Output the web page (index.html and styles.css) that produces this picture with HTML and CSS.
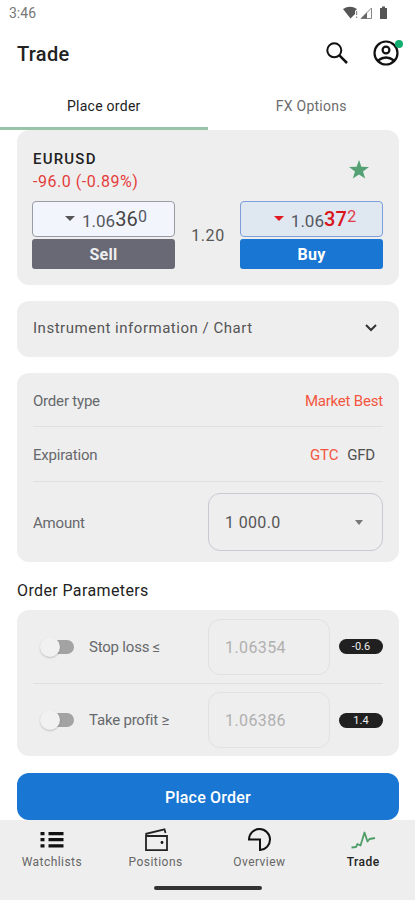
FILE: index.html
```html
<!DOCTYPE html>
<html lang="en">
<head>
<meta charset="utf-8">
<meta name="viewport" content="width=device-width, initial-scale=1">
<title>Trade</title>
<link rel="stylesheet" href="styles.css">
</head>
<body>
<div class="status">
  <span class="clock">3:46</span>
  <svg class="status-icons" width="46" height="14" viewBox="0 0 46 14">
    <path fill="#555" d="M0 3Q7-1.500 14 3L12 5V8L7.500 12.500Z"/>
    <path fill="#888" d="M13 5H14.200V9H13ZM13 10.500H14.200V12H13Z"/>
    <path fill="#fff" stroke="#888" d="M18 12.500L28.500 2V12.500Z"/>
    <path fill="#666" d="M18 12.500L24 6.500V12.500Z"/>
    <path fill="#555" d="M37 2H39V.500H42V2H44V13H37Z"/>
  </svg>
</div>
<header class="header">
  <h1>Trade</h1>
  <div class="header-icons">
    <svg width="24" height="24" viewBox="0 0 24 24" fill="none" stroke="#111" stroke-width="2"><circle cx="9.300" cy="9.300" r="7"/><path stroke-width="2.500" d="M14.400 14.400L22 22"/></svg>
    <div class="account">
      <svg width="26" height="26" viewBox="0 0 26 26" fill="none" stroke="#111" stroke-width="2.200"><circle cx="13" cy="13" r="11.500"/><circle cx="13" cy="10" r="3.400"/><path d="M5 20.500Q13 14.500 21 20.500"/></svg>
      <i class="dot"></i>
    </div>
  </div>
</header>
<nav class="tabs">
  <span class="tab active">Place order</span>
  <span class="tab">FX Options</span>
</nav>
<main>
  <section class="card quote">
    <div class="quote-head">
      <div>
        <div class="symbol">EURUSD</div>
        <div class="change">-96.0 (-0.89%)</div>
      </div>
      <svg class="star" width="20" height="19" viewBox="0 0 20 19"><path fill="#55a174" d="M10 0L12.400 6.700L20 7L14 11.500L16.200 18.500L10 14.400L3.800 18.500L6 11.500L0 7L7.600 6.700Z"/></svg>
    </div>
    <div class="prices">
      <div class="side sell">
        <div class="price"><i class="tri"></i><span class="p1">1.06</span><span class="p2">36</span><span class="p3">0</span></div>
        <div class="action">Sell</div>
      </div>
      <div class="spread">1.20</div>
      <div class="side buy">
        <div class="price"><i class="tri"></i><span class="p1">1.06</span><span class="p2">37</span><span class="p3">2</span></div>
        <div class="action">Buy</div>
      </div>
    </div>
  </section>
  <section class="card info">
    <span>Instrument information / Chart</span>
    <svg width="12" height="8" viewBox="0 0 12 8"><path fill="none" stroke="#333" stroke-width="2" d="M1 1L6 6L11 1"/></svg>
  </section>
  <section class="card order">
    <div class="row r1"><span>Order type</span><span class="red">Market Best</span></div>
    <div class="row r2"><span>Expiration</span><span class="terms"><span class="red">GTC</span><span class="dark">GFD</span></span></div>
    <div class="row r3"><span>Amount</span><div class="select"><span>1 000.0</span><i class="tri"></i></div></div>
  </section>
  <h2>Order Parameters</h2>
  <section class="card params">
    <div class="param">
      <div class="toggle"><i class="knob"></i></div><span class="label">Stop loss ≤</span>
      <div class="field">1.06354</div><span class="pill">-0.6</span>
    </div>
    <div class="param">
      <div class="toggle"><i class="knob"></i></div><span class="label">Take profit ≥</span>
      <div class="field">1.06386</div><span class="pill">1.4</span>
    </div>
  </section>
  <div class="submit">Place Order</div>
</main>
<footer>
  <div class="nav">
    <div class="item">
      <svg width="26" height="26" viewBox="0 0 26 26" fill="#111"><path d="M1.500 5h4v3.300H1.500zM9.500 5h15v3.300H9.500zM1.500 11h4v3.300H1.500zM9.500 11h15v3.300H9.500zM1.500 17.200h4v3.300H1.500zM9.500 17.200h15v3.300H9.500z"/></svg>
      <span>Watchlists</span>
    </div>
    <div class="item">
      <svg width="26" height="26" viewBox="0 0 26 26" fill="none" stroke="#222" stroke-width="1.800"><path d="M3 9H24V23.200H3ZM3.200 9V6.800L21.500 2.300L22.500 6"/><circle cx="19" cy="15.500" r="1.400" fill="#111" stroke="none"/></svg>
      <span>Positions</span>
    </div>
    <div class="item">
      <svg width="26" height="26" viewBox="0 0 26 26" fill="none" stroke="#111" stroke-width="2"><path d="M3 12.500A10.500 10.500 0 1 1 14 23V12.500Z"/></svg>
      <span>Overview</span>
    </div>
    <div class="item current">
      <svg width="26" height="26" viewBox="0 0 26 26" fill="none" stroke="#4f9d69" stroke-width="1.800" stroke-linejoin="round"><path d="M1.500 20.500L6 20L7.500 17L10.500 18.500L14.500 5.500L17.500 14.500L19.500 12L25 11"/></svg>
      <span>Trade</span>
    </div>
  </div>
  <div class="home"></div>
</footer>
</body>
</html>
```
FILE: styles.css
```css
* { box-sizing: border-box; }
body { margin: 0; width: 415px; height: 900px; overflow: hidden; background: #fff; color: #222; font-family: Roboto, sans-serif; font-size: 14px; white-space: nowrap; display: flex; flex-direction: column; }
i { display: block; }
svg { display: block; flex: none; }
.status { height: 26px; padding: 0 26px 0 9px; display: flex; align-items: center; justify-content: space-between; color: #777; }
.clock { font-size: 14px; }
.header { height: 54px; padding: 0 16px 0 17px; display: flex; align-items: center; justify-content: space-between; }
h1 { margin: 2px 0 0; font-size: 20px; font-weight: 500; letter-spacing: .3px; }
.header-icons { display: flex; align-items: center; gap: 24px; }
.account { position: relative; }
.dot { position: absolute; right: -4px; top: 0; width: 8px; height: 8px; border-radius: 50%; background: #10ad70; }
.tabs { height: 50px; display: flex; }
.tab { width: 208px; padding-top: 18px; line-height: 16px; text-align: center; color: #6c6c6c; font-size: 14px; letter-spacing: .27px; border-bottom: 3px solid transparent; }
.tab.active { color: #222; border-color: #9bc3a8; }
main { width: 382px; margin-left: 17px; display: flex; flex-direction: column; }
.card { background: #eee; border-radius: 12px; flex: none; }
.quote { height: 155px; padding: 20px 16px 0; }
.quote-head { height: 51px; display: flex; justify-content: space-between; }
.symbol { font-size: 15px; line-height: 18px; font-weight: 500; letter-spacing: 1.2px; }
.change { margin-top: 4px; font-size: 16px; line-height: 19px; color: #e43d3d; letter-spacing: .53px; }
.star { margin: 10px 14px 0 0; }
.prices { display: flex; justify-content: space-between; }
.side { width: 143px; display: flex; flex-direction: column; gap: 2px; }
.sell { margin-left: -1px; }
.price { height: 36px; border: 1px solid #999ca5; border-radius: 4px; background: #f3f5fd; display: flex; align-items: center; justify-content: center; color: #55585f; }
.sell .price { padding-left: 5px; }
.buy .price { padding-left: 7px; }
.price .tri { margin-right: 7px; margin-bottom: 1px; }
.tri { width: 0; height: 0; border: 5px solid transparent; border-top-color: #555; border-bottom: 0; }
.p1 { font-size: 17px; letter-spacing: 0; margin-top: 3px; }
.p2 { font-size: 20px; color: #444; letter-spacing: .2px; }
.p3 { font-size: 16px; margin-bottom: 6px; }
.buy .p2 { color: #d9151c; font-weight: 500; }
.buy .price { background: #dfe7f1; border-color: #7d9eda; }
.buy .p3 { color: #e23a45; }
.buy .tri { border-top-color: #df1921; }
.action { height: 30px; border-radius: 3px; background: #696975; color: #eee; font-size: 16px; font-weight: 700; line-height: 31px; text-align: center; letter-spacing: .3px; }
.buy .action { background: #1976d2; color: #fff; }
.spread { align-self: center; padding-left: 1px; font-size: 16px; letter-spacing: .6px; color: #555; }
.info { height: 56px; margin-top: 16px; padding: 0 22px 2px 16px; display: flex; align-items: center; justify-content: space-between; font-size: 15px; letter-spacing: .52px; color: #555; }
.order { height: 189px; margin-top: 16px; padding: 0 16px; color: #66686c; }
.row { display: flex; align-items: center; justify-content: space-between; border-bottom: 1px solid #e0e0e2; font-size: 15px; letter-spacing: -.2px; }
.r1 { height: 54px; padding-top: 2px; }
.r2 { height: 55px; padding: 2px 8px 0 0; }
.r3 { height: 80px; border: 0; }
.r3 > span { margin-top: 1px; }
.red { color: #f4553f; }
.dark { color: #505050; }
.terms { display: flex; gap: 9px; }
.select { width: 175px; height: 58px; border: 1px solid #c8c9d3; border-radius: 12px; padding: 1px 19px 0 16px; display: flex; align-items: center; justify-content: space-between; color: #555; font-size: 16px; letter-spacing: .35px; }
.select .tri { border-width: 5px 4px 0; border-top-color: #777; }
h2 { margin: 0; height: 48px; line-height: 57px; font-size: 16px; font-weight: 400; letter-spacing: .38px; }
.params { height: 146px; padding: 0 16px; }
.param { height: 73px; display: flex; align-items: center; color: #66686c; }
.param + .param { border-top: 1px solid #e0e0e2; }
.toggle { position: relative; flex: none; width: 26px; height: 14px; margin-left: 15px; border-radius: 7px; background: #a3a3a3; }
.knob { position: absolute; left: -8px; top: -3px; width: 20px; height: 20px; border-radius: 50%; background: #f1f1f1; box-shadow: 0 1px 2px #0003; }
.label { width: 134px; padding-left: 15px; font-size: 15px; letter-spacing: -.2px; }
.field { width: 122px; height: 56px; border: 1px solid #e1e1e3; border-radius: 12px; padding-left: 16px; line-height: 55px; font-size: 16px; letter-spacing: .4px; color: #b0b0b0; }
.pill { width: 44px; height: 15px; margin-left: auto; border-radius: 8px; background: #202020; color: #eee; font-size: 11px; line-height: 16px; text-align: center; }
.submit { height: 47px; margin-top: 17px; border-radius: 12px; background: #1976d2; color: #fff; font-size: 16px; font-weight: 500; letter-spacing: .22px; line-height: 49px; text-align: center; }
footer { height: 80px; margin-top: auto; background: #eee; }
.nav { height: 66px; display: flex; }
.item { flex: 1; padding-top: 7px; display: flex; flex-direction: column; align-items: center; color: #666; font-size: 12px; line-height: 14px; letter-spacing: .45px; }
.item span { margin-top: 2px; }
.current { color: #222; font-weight: 500; }
.home { width: 108px; height: 4px; margin-left: 154px; border-radius: 2px; background: #333; }
```
